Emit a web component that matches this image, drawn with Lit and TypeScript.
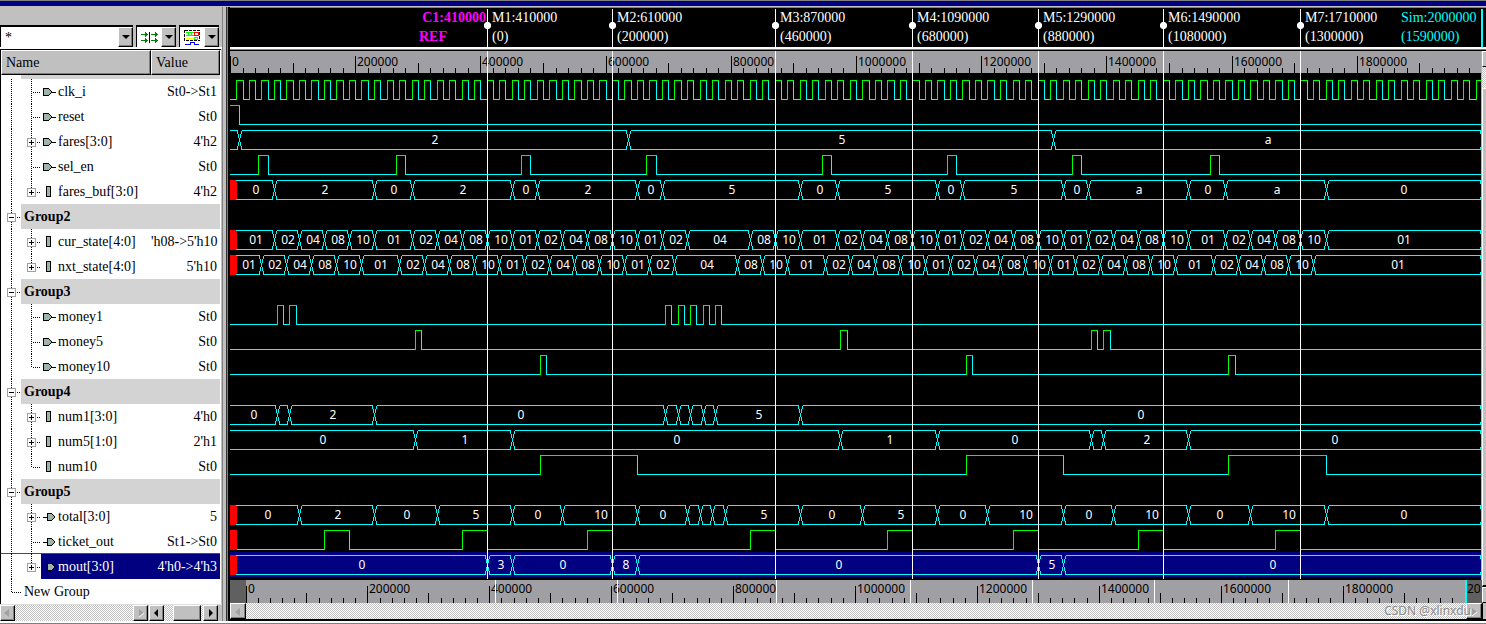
import { LitElement, html, svg, css, nothing } from "lit";
import { customElement, state } from "lit/decorators.js";
import { classMap } from "lit/directives/class-map.js";

type Kind = "in" | "out" | "reg";
interface Row {
  name: string;
  value?: string;
  kind?: Kind;
  expand?: boolean;
  group?: boolean;
  last?: boolean;
  selected?: boolean;
  cursorBelow?: boolean;
}
interface Bus {
  row: number;
  x?: boolean;
  values: string[];
  edges: number[];
}
interface Pulse {
  row: number;
  x?: boolean;
  highs: [number, number][];
}

const END = 2000;
const ROW_H = 25;

const ROWS: Row[] = [
  { name: "clk_i", value: "St0->St1", kind: "in" },
  { name: "reset", value: "St0", kind: "in" },
  { name: "fares[3:0]", value: "4'h2", kind: "in", expand: true },
  { name: "sel_en", value: "St0", kind: "in" },
  { name: "fares_buf[3:0]", value: "4'h2", kind: "reg", expand: true, last: true },
  { name: "Group2", group: true },
  { name: "cur_state[4:0]", value: "'h08->5'h10", kind: "reg", expand: true },
  { name: "nxt_state[4:0]", value: "5'h10", kind: "reg", expand: true, last: true },
  { name: "Group3", group: true },
  { name: "money1", value: "St0", kind: "in" },
  { name: "money5", value: "St0", kind: "in" },
  { name: "money10", value: "St0", kind: "in", last: true },
  { name: "Group4", group: true },
  { name: "num1[3:0]", value: "4'h0", kind: "reg", expand: true },
  { name: "num5[1:0]", value: "2'h1", kind: "reg", expand: true },
  { name: "num10", value: "St0", kind: "reg", last: true },
  { name: "Group5", group: true },
  { name: "total[3:0]", value: "5", kind: "out", expand: true },
  { name: "ticket_out", value: "St1->St0", kind: "out", cursorBelow: true },
  { name: "mout[3:0]", value: "4'h0->4'h3", kind: "out", expand: true, last: true, selected: true },
];

const STATE_EDGES = [
  70, 110, 150, 190, 230, 290, 330, 370, 410, 450, 490, 530, 570, 610, 650, 690, 730, 830, 870, 910, 970, 1010,
  1050, 1090, 1130, 1170, 1210, 1250, 1290, 1330, 1370, 1410, 1450, 1490, 1530, 1590, 1630, 1670, 1710, 1750,
];
const STATE_CYCLE = ["01", "02", "04", "08", "10"];
const STATE_VALUES = [...STATE_EDGES, END].map((_, i) => STATE_CYCLE[i % 5]);

const BUSES: Bus[] = [
  { row: 2, values: ["", "2", "5", "a"], edges: [15, 635, 1315] },
  {
    row: 4,
    x: true,
    values: ["0", "2", "0", "2", "0", "2", "0", "5", "0", "5", "0", "5", "0", "a", "0", "a", "0"],
    edges: [70, 230, 290, 450, 490, 650, 690, 910, 970, 1130, 1170, 1330, 1370, 1530, 1590, 1750],
  },
  { row: 6, x: true, values: STATE_VALUES, edges: STATE_EDGES },
  { row: 7, x: true, values: STATE_VALUES, edges: STATE_EDGES.map((t) => t - 20) },
  {
    row: 13,
    values: ["0", "", "2", "0", "", "", "", "", "5", "0"],
    edges: [75, 95, 230, 695, 715, 735, 755, 775, 910],
  },
  { row: 14, values: ["0", "1", "0", "1", "0", "", "2", "0"], edges: [295, 450, 975, 1130, 1375, 1395, 1530] },
  {
    row: 17,
    x: true,
    values: ["0", "2", "0", "5", "0", "10", "0", "", "", "", "5", "0", "5", "0", "10", "0", "10", "0", "10", "0"],
    edges: [110, 230, 330, 450, 530, 650, 730, 750, 770, 790, 910, 1010, 1130, 1210, 1330, 1410, 1530, 1630, 1750],
  },
  { row: 19, x: true, values: ["0", "3", "0", "8", "0", "5", "0"], edges: [410, 450, 610, 650, 1290, 1330] },
];

const span = (starts: number[], len: number): [number, number][] => starts.map((s) => [s, s + len]);

const PULSES: Pulse[] = [
  { row: 0, highs: span(Array.from({ length: 100 }, (_, i) => 10 + i * 20), 10) },
  { row: 1, highs: [[0, 15]] },
  { row: 3, highs: span([45, 265, 465, 665, 945, 1145, 1345, 1565], 15) },
  { row: 9, highs: span([75, 95, 695, 715, 735, 755, 775], 10) },
  { row: 10, highs: span([295, 975, 1375, 1395], 10) },
  { row: 11, highs: span([495, 1175, 1595], 10) },
  { row: 15, highs: span([495, 1175, 1595], 155) },
  { row: 18, x: true, highs: span([150, 370, 570, 830, 1050, 1250, 1450, 1670], 40) },
];

const MARKERS = [410, 610, 870, 1090, 1290, 1490, 1710];

@customElement("signal-tree")
export class SignalTree extends LitElement {
  static styles = css`
    :host {
      display: block;
      background: #fff;
      border-left: 1px solid #000;
    }
    table {
      width: 100%;
      table-layout: fixed;
      border-collapse: separate;
      border-spacing: 0;
    }
    th,
    td {
      padding: 0;
      overflow: hidden;
      white-space: nowrap;
    }
    .name-col {
      width: 150px;
    }
    .head th {
      height: 25px;
      box-sizing: border-box;
      padding-left: 4px;
      text-align: left;
      font-weight: normal;
      line-height: 23px;
      background: #c0c0c0;
      border: 1px solid;
      border-color: #fff #000 #000 #fff;
      box-shadow: inset -1px -1px #808080;
    }
    .lead td {
      height: 4px;
      background: linear-gradient(to right, #fff 20px, #d3d3d3 20px);
    }
    .item td {
      height: 25px;
      line-height: 25px;
    }
    .cell {
      display: flex;
      height: 25px;
    }
    .cell svg {
      display: block;
      flex: none;
    }
    .item .value {
      text-align: right;
      padding-right: 3px;
    }
    .group td {
      font-weight: bold;
      background: linear-gradient(to right, #fff 20px, #d3d3d3 20px);
    }
    .cursor td {
      box-shadow: inset 0 -1px #ff0000;
    }
    .selected td {
      color: #fff;
      background: #000080;
    }
    .selected td:first-child {
      background: linear-gradient(to right, #fff 40px, #000080 40px);
    }
  `;

  private icon(kind: Kind | undefined) {
    if (kind === "in")
      return svg`<path d="M42.500 9.500h5l3 3v1l-3 3h-5z" fill="#9db5a8" stroke="#000"/><path d="M50 13h5" stroke="#000"/>`;
    if (kind === "out")
      return svg`<path d="M42 13h5" stroke="#000"/><path d="M46.500 9.500h4l3 3v1l-3 3h-4z" fill="#9db5a8" stroke="#000"/>`;
    return svg`<rect x="45.500" y="7.500" width="4" height="10" fill="#9db5a8" stroke="#000"/>`;
  }

  private box(x: number, plus: boolean) {
    return svg`<rect x=${x - 4} y="9.500" width="8" height="8" fill="#fff" stroke="#a0a0a0"/>
      <path d=${`M${x - 2.5} 13.500h5` + (plus ? `M${x} 11v5` : "")} stroke="#000"/>`;
  }

  private dots(d: string) {
    return svg`<path d=${d} fill="none" stroke="#000" stroke-dasharray="1 1"/>`;
  }

  private row(r: Row) {
    if (r.group)
      return html`<tr class="item group">
        <td colspan="2">
          <div class="cell">
            <svg width="23" height="25" shape-rendering="crispEdges" aria-hidden="true">
              ${this.dots("M10.500 0V25M12 13.500H20")} ${this.box(10.5, false)}
            </svg>
            ${r.name}
          </div>
        </td>
      </tr>`;
    const stop = r.last ? 13 : 25;
    return html`<tr class=${classMap({ item: true, selected: !!r.selected, cursor: !!r.cursorBelow })}>
      <td>
        <div class="cell">
          <svg width="57" height="25" shape-rendering="crispEdges" aria-hidden="true">
            ${this.dots(`M10.500 0V25M30.500 0V${stop}M32 13.500H40`)} ${r.expand ? this.box(30.5, true) : nothing}
            ${this.icon(r.kind)}
          </svg>
          ${r.name}
        </div>
      </td>
      <td class="value">${r.value}</td>
    </tr>`;
  }

  render() {
    return html`<table>
      <colgroup>
        <col class="name-col" />
        <col />
      </colgroup>
      <thead>
        <tr class="head">
          <th scope="col">Name</th>
          <th scope="col">Value</th>
        </tr>
      </thead>
      <tbody>
        <tr class="lead"><td colspan="2"></td></tr>
        ${ROWS.map((r) => this.row(r))}
        <tr class="item">
          <td colspan="2">
            <div class="cell">
              <svg width="23" height="25" shape-rendering="crispEdges" aria-hidden="true">
                ${this.dots("M10.500 0V13M11 13.500H20")}
              </svg>
              New Group
            </div>
          </td>
        </tr>
      </tbody>
    </table>`;
  }
}

@customElement("wave-view")
export class WaveView extends LitElement {
  static styles = css`
    :host {
      display: block;
      min-width: 0;
      background: #000;
    }
    svg {
      display: block;
      width: 100%;
      font-family: "Liberation Serif", serif;
      font-size: 14px;
    }
    .head {
      height: 39px;
      border-top: 1px solid #808080;
    }
    .rule {
      height: 4px;
      box-sizing: border-box;
      background: #fff;
      border-bottom: 1px solid #000;
      box-shadow: inset 0 -1px #808080;
    }
    .body {
      display: flex;
    }
    .canvas {
      flex: 1;
      min-width: 0;
    }
    .ruler {
      height: 22px;
      background: #a09fa4;
    }
    .waves {
      height: 507px;
    }
    .overview {
      height: 23px;
      background: #a09fa4;
    }
    .digits {
      font-family: "Noto Sans", sans-serif;
      font-size: 12px;
    }
    .bold {
      font-weight: bold;
    }
    .hscroll {
      display: flex;
      height: 16px;
      background: repeating-conic-gradient(#c0c0c0 0 25%, #fff 0 50%) 0 0 / 2px 2px;
      justify-content: space-between;
    }
    .hscroll button {
      width: 16px;
      height: 16px;
      padding: 0;
      background: #c0c0c0;
      border: 1px solid;
      border-color: #fff #000 #000 #fff;
      box-shadow: inset -1px -1px #808080;
    }
    .vscroll {
      width: 4px;
      display: flex;
      flex-direction: column;
      overflow: hidden;
    }
    .track {
      height: 21px;
      background: repeating-conic-gradient(#c0c0c0 0 25%, #fff 0 50%) 0 0 / 2px 2px;
    }
    .vscroll button {
      flex: none;
      width: 16px;
      height: 16px;
      padding: 0;
      background: #c0c0c0;
      border: 1px solid;
      border-color: #fff #000 #000 #fff;
    }
    .thumb {
      flex: 1;
      background: #c0c0c0;
      border-left: 1px solid #fff;
      border-top: 1px solid #fff;
      border-bottom: 2px solid #000;
    }
    .corner {
      flex: none;
      height: 16px;
      background: #c0c0c0;
      border-left: 1px solid #000;
    }
  `;

  @state() private w = 1252;
  private observer?: ResizeObserver;

  firstUpdated() {
    const canvas = this.renderRoot.querySelector(".canvas") as HTMLElement;
    this.observer = new ResizeObserver(() => {
      this.w = Math.round(canvas.clientWidth);
    });
    this.observer.observe(canvas);
  }

  disconnectedCallback() {
    super.disconnectedCallback();
    this.observer?.disconnect();
  }

  private x = (t: number) => Math.round((t * this.w) / END);
  private ox = (t: number) => 16 + Math.floor((t * (this.w - 33)) / END);

  private head() {
    const c = this.x(MARKERS[0]);
    return svg`
      <g fill="#ff00ff">
        <text class="bold" x=${c - 1} y="14" text-anchor="end">C1:410000</text>
        <text class="bold" x=${c - 68} y="33">REF</text>
      </g>
      ${MARKERS.map((t, i) => {
        const x = this.x(t);
        return svg`<path d=${`M${x + 0.5} 1V39`} stroke="#fff" shape-rendering="crispEdges"/>
          <path d=${`M${x - 1} 14h3l2 2v3l-2 2h-3l-2 -2v-3z`} fill="#fff"/>
          <text x=${x + 5} y="14" fill="#fff">M${i + 1}:${t}000</text>
          <text x=${x + 5} y="33" fill="#fff">(${t - MARKERS[0] ? `${t - MARKERS[0]}000` : "0"})</text>`;
      })}
      <g fill="#00ffff">
        <text x=${this.w - 81} y="14">Sim:2000000</text>
        <text x=${this.w - 81} y="33">(1590000)</text>
        <rect x=${this.w - 1} y="1" width="2" height="38"/>
      </g>`;
  }

  private ticks(pos: (t: number) => number, bottom: number, baseline: number, until: number) {
    const out = [];
    for (let t = 0; t < until; t += 20) {
      const h = t % 200 === 0 ? 17 : t % 100 === 0 ? 10 : 5;
      out.push(`M${pos(t) + 0.5} ${bottom - h}V${bottom}`);
    }
    const labels = Array.from({ length: Math.ceil(until / 200) }, (_, i) => i * 200);
    return svg`<path d=${out.join("")} stroke="#000" shape-rendering="crispEdges"/>
      ${labels.map((t) => svg`<text x=${pos(t) + 2} y=${baseline}>${t ? `${t}000` : "0"}</text>`)}`;
  }

  private lines(pos: (t: number) => number, h: number) {
    return svg`<path d=${MARKERS.map((t) => `M${pos(t) + 0.5} 0V${h}`).join("")} stroke="#fff" shape-rendering="crispEdges"/>`;
  }

  private bus(b: Bus) {
    const top = 7.5 + b.row * ROW_H;
    const bot = top + 19;
    const xs = b.edges.map((t) => this.x(t) + 0.5);
    const stops = [b.x ? this.x(10) : 0, ...xs, this.w - 1];
    let d = "";
    for (let i = 0; i < stops.length - 1; i++) {
      const a = stops[i] + (i ? 2 : 0);
      const z = stops[i + 1] - (i < stops.length - 2 ? 2 : 0);
      d += `M${a} ${top}H${z}M${a} ${bot}H${z}`;
    }
    for (const x of xs)
      d += `M${x - 2} ${top}v2l1 3l2 9l1 3v2M${x + 2} ${top}v2l-1 3l-2 9l-1 3v2`;
    d += `M${this.w - 1.5} ${top}v3M${this.w - 1.5} ${bot}v-3`;
    return svg`<path d=${d} fill="none" stroke="#00ffff" shape-rendering="crispEdges"/>
      ${b.values.map((v, i) =>
        v
          ? svg`<text x=${Math.floor((stops[i] + stops[i + 1]) / 2) + 1} y=${top + 13.5} text-anchor="middle">${v}</text>`
          : nothing,
      )}`;
  }

  private pulse(p: Pulse) {
    const top = 7.5 + p.row * ROW_H;
    const bot = top + 19;
    let low = p.x ? this.x(10) : 0;
    let cyan = "";
    let green = "";
    for (const [a, b] of p.highs) {
      const xa = this.x(a) + 0.5;
      const xb = Math.min(this.x(b), this.w - 1) + 0.5;
      cyan += a > 0 ? `M${low} ${bot}H${xa}` : "";
      cyan += `M${xb} ${top - 0.5}V${bot}`;
      green += a > 0 ? `M${xa} ${bot + 0.5}V${top}H${xb}` : `M0 ${top}H${xb}`;
      low = xb - 0.5;
    }
    cyan += `M${low} ${bot}H${this.w - 1}`;
    return svg`<path d=${cyan} fill="none" stroke="#00ffff"/><path d=${green} fill="none" stroke="#00ff00"/>`;
  }

  private waves() {
    const unknown = [...BUSES, ...PULSES].filter((s) => s.x);
    return svg`
      <rect x="0" y=${4 + 19 * ROW_H} width=${this.w} height="25" fill="#000080"/>
      <g shape-rendering="crispEdges">${PULSES.map((p) => this.pulse(p))}</g>
      ${unknown.map((s) => svg`<rect x="0" y=${7 + s.row * ROW_H} width="7" height="20" fill="#ff0000"/>`)}
      <g class="digits" fill="#fff">${BUSES.map((b) => this.bus(b))}</g>
      ${this.lines(this.x, 506)}
      <path d=${`M${this.w - 0.5} 0V507`} stroke="#00ffff" shape-rendering="crispEdges"/>`;
  }

  render() {
    const end = this.ox(END);
    return html`
      <svg class="head" role="img" aria-label="Markers">${this.head()}</svg>
      <div class="rule"></div>
      <div class="body">
        <div class="canvas">
          <svg class="ruler" role="img" aria-label="Time ruler">
            <g class="digits">${this.ticks(this.x, 22, 15, END)}</g>
            ${this.lines(this.x, 22)}
            <path d=${`M${this.w - 0.5} 0V22`} stroke="#00ffff" shape-rendering="crispEdges" />
          </svg>
          <svg class="waves" role="img" aria-label="Waveforms">${this.waves()}</svg>
          <svg class="overview" role="img" aria-label="Full range">
            <rect x="0" y="0" width="16" height="23" fill="#606060" />
            <rect x=${end} y="0" width=${this.w - end} height="23" fill="#606060" />
            <g class="digits">
              ${this.ticks(this.ox, 23, 13, END)}
              <text x=${end + 2} y="13">20</text>
            </g>
            ${this.lines(this.ox, 23)}
            <rect x=${end} y="0" width="2" height="23" fill="#00ffff" />
          </svg>
          <div class="hscroll">
            <button aria-label="Scroll left">
              <svg width="14" height="13" aria-hidden="true"><path d="M4 7l5-4v8z" fill="#a0a0a0" /></svg>
            </button>
            <button aria-label="Scroll right">
              <svg width="14" height="13" aria-hidden="true"><path d="M10 7l-5-4v8z" fill="#a0a0a0" /><path d="M5 11l5-4" stroke="#fff" /></svg>
            </button>
          </div>
        </div>
        <div class="vscroll">
          <button aria-label="Scroll up"></button>
          <div class="track"></div>
          <div class="thumb"></div>
          <button aria-label="Scroll down"></button>
          <div class="corner"></div>
        </div>
      </div>
    `;
  }
}

@customElement("app-root")
export class AppRoot extends LitElement {
  static styles = css`
    :host {
      display: block;
      position: relative;
      background: #c0c0c0;
      color: #000;
      font-family: "Liberation Serif", serif;
      font-size: 14px;
    }
    .title {
      height: 5px;
      background: #000080;
      border-top: 1px solid #808080;
      border-bottom: 1px solid #c0c0c0;
    }
    .main {
      display: flex;
    }
    .side {
      width: 222px;
      flex: none;
      display: flex;
      flex-direction: column;
      background: #c0c0c0;
    }
    .tools {
      display: flex;
      gap: 3px;
      margin-top: 18px;
      padding-right: 3px;
      height: 22px;
      border-bottom: 2px solid #fff;
    }
    .field {
      display: flex;
      box-sizing: border-box;
      height: 22px;
      background: #fff;
      border-top: 2px solid #000;
      border-left: 1px solid #000;
    }
    .grow {
      flex: 1;
      min-width: 0;
    }
    .filter {
      flex: 1;
      min-width: 0;
      border: 0;
      padding: 2px 0 0 4px;
      background: #fff;
      font: 14px "Liberation Serif", serif;
      outline: none;
    }
    .tool {
      width: 24px;
      padding: 0;
      border: 0;
      background: #fff;
    }
    .tool svg,
    .drop svg {
      display: block;
      margin: auto;
    }
    .drop {
      width: 15px;
      padding: 0;
      background: #c0c0c0;
      border: 1px solid;
      border-color: #fff #000 #000 #fff;
      box-shadow: inset -1px -1px #808080;
    }
    signal-tree {
      margin-right: 1px;
      padding-right: 1px;
      border-top: 1px solid #000;
      flex: 1;
    }
    .bars {
      display: flex;
      height: 16px;
      gap: 1px;
      padding-right: 4px;
      border-top: 1px solid #dcdcdc;
    }
    .bar {
      display: flex;
      background: repeating-conic-gradient(#c0c0c0 0 25%, #fff 0 50%) 0 0 / 2px 2px;
    }
    .bar.first {
      width: 148px;
      justify-content: space-between;
    }
    .bar.second {
      flex: 1;
    }
    .raised {
      width: 15px;
      box-sizing: border-box;
      padding: 0;
      background: #c0c0c0;
      border: 1px solid;
      border-color: #fff #000 #000 #fff;
      box-shadow: inset -1px -1px #808080;
    }
    .raised.knob {
      width: 28px;
      margin: 0 2px 0 auto;
    }
    .split {
      width: 8px;
      flex: none;
      box-sizing: border-box;
      background: #c0c0c0;
      border-left: 1px solid #808080;
      box-shadow: inset -2px 0 #000, inset -3px 0 #808080, inset -4px 0 #303030;
    }
    wave-view {
      flex: 1;
    }
    .foot {
      height: 2px;
      border-top: 2px solid #fff;
      background: linear-gradient(#808080 50%, #c0c0c0 50%);
      border-bottom: 1px solid #c0c0c0;
    }
    .watermark {
      position: absolute;
      right: 15px;
      bottom: 6px;
      font: 12px/18px "Noto Sans", sans-serif;
      color: #8a8a8a;
      text-shadow: 1px 1px #fff;
    }
  `;

  private arrow = html`<svg width="8" height="5" aria-hidden="true"><path d="M0 0h8l-4 4z" /></svg>`;

  render() {
    return html`
      <div class="title"></div>
      <div class="main">
        <div class="side">
          <div class="tools">
            <div class="field grow">
              <input class="filter" aria-label="Filter" .value=${"*"} />
              <button class="drop" aria-label="Filter history">${this.arrow}</button>
            </div>
            <div class="field">
              <button class="tool" aria-label="Edge search">
                <svg width="19" height="13" shape-rendering="crispEdges" fill="none" stroke="#008000" aria-hidden="true">
                  <path d="M1 3.500h7M5.500 1v5M6.500 2v3M1 9.500h7M5.500 7v5M6.500 8v3M11 3.500h7M15.500 1v5M16.500 2v3M11 9.500h7M15.500 7v5M16.500 8v3" />
                  <path d="M9.500 1v11" stroke="#000" />
                </svg>
              </button>
              <button class="drop" aria-label="Edge search options">${this.arrow}</button>
            </div>
            <div class="field">
              <button class="tool" aria-label="Signal grouping">
                <svg width="17" height="16" shape-rendering="crispEdges" fill="none" aria-hidden="true">
                  <rect x="0.500" y="1.500" width="15" height="10" stroke="#000" stroke-dasharray="3 1" />
                  <path d="M2 3.500h9M2 6.500h9M4.500 3v4M7.500 3v4" stroke="#00ff00" />
                  <rect x="10.500" y="3.500" width="4" height="3" stroke="#ff0000" />
                  <path d="M2 9.500h8" stroke="#ffff00" />
                  <rect x="10.500" y="8.500" width="3" height="2" stroke="#00ff00" />
                  <path d="M1 15.500h5v-2h4v2h5" stroke="#0000ff" />
                </svg>
              </button>
              <button class="drop" aria-label="Signal grouping options">${this.arrow}</button>
            </div>
          </div>
          <signal-tree></signal-tree>
          <div class="bars">
            <div class="bar first">
              <button class="raised" aria-label="Scroll names left">
                <svg width="11" height="11" aria-hidden="true"><path d="M2 6l5-4v8z" fill="#a0a0a0" /></svg>
              </button>
              <button class="raised" aria-label="Scroll names right">
                <svg width="11" height="11" aria-hidden="true"><path d="M9 6l-5-4v8z" fill="#a0a0a0" /><path d="M4 10l5-4" stroke="#fff" /></svg>
              </button>
            </div>
            <div class="bar second">
              <button class="raised" aria-label="Scroll values left">
                <svg width="11" height="11" aria-hidden="true"><path d="M3 6l4-4v8z" /></svg>
              </button>
              <button class="raised knob" aria-label="Values position"></button>
              <button class="raised" aria-label="Scroll values right">
                <svg width="11" height="11" aria-hidden="true"><path d="M8 6l-4-4v8z" /></svg>
              </button>
            </div>
          </div>
        </div>
        <div class="split"></div>
        <wave-view></wave-view>
      </div>
      <div class="foot"></div>
      <div class="watermark">CSDN @xlinxdu</div>
    `;
  }
}
